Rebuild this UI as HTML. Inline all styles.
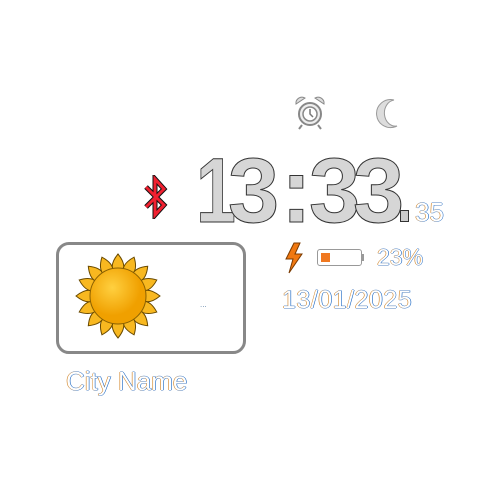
<!DOCTYPE html>
<html><head><style>
html,body{margin:0;width:480px;height:480px;background:#fff;overflow:hidden;font-family:"Liberation Sans",sans-serif}
.a{position:absolute}
.t{color:#fff;text-shadow:0.6px 0 #1060c0,-0.6px 0 #d08020,0 0.6px #5080c0,0 -0.6px #5080c0}
.d{position:absolute;top:145px;font-size:92px;line-height:92px;font-weight:bold;color:#d6d6d6;-webkit-text-stroke:1px #333}
</style></head><body>
<div class="d" style="left:196px;transform:scaleX(0.78);transform-origin:left top">1</div>
<div class="d" style="left:228px">3</div>
<div class="d" style="left:281px">:</div>
<div class="d" style="left:309px">3</div>
<div class="d" style="left:353px">3</div>
<div class="a" style="left:400px;top:210px;width:7px;height:10px;background:#ccc;border:1px solid #333"></div>
<div class="a t" style="left:415px;top:197px;font-size:26px">35</div>
<!-- bluetooth -->
<svg class="a" style="left:143px;top:175px" width="26" height="44" viewBox="0 0 26 44"><path d="M3 12 L21 30 L12 40 L12 4 L21 14 L3 32" fill="none" stroke="#111" stroke-width="5"/><path d="M3 12 L21 30 L12 40 L12 4 L21 14 L3 32" fill="none" stroke="#f02030" stroke-width="3"/></svg>
<!-- alarm -->
<svg class="a" style="left:293px;top:95px" width="34" height="36" viewBox="0 0 34 36"><circle cx="17" cy="19" r="11" fill="#eee" stroke="#888" stroke-width="2"/><circle cx="17" cy="19" r="7" fill="#fff" stroke="#888" stroke-width="1.5"/><path d="M17 14v5l3 3" stroke="#777" fill="none" stroke-width="1.5"/><path d="M3 9a6 6 0 0 1 9-6z M31 9a6 6 0 0 0-9-6z" fill="#ddd" stroke="#888"/><path d="M9 30l-3 4M25 30l3 4" stroke="#888" stroke-width="2"/></svg>
<!-- moon -->
<svg class="a" style="left:374px;top:98px" width="26" height="32" viewBox="0 0 26 32"><path d="M20 2 A14 14 0 1 0 23 28 A11 13 0 0 1 20 2z" fill="#ddd" stroke="#999"/></svg>
<!-- bolt -->
<svg class="a" style="left:283px;top:242px" width="22" height="32" viewBox="0 0 22 32"><path d="M11 1 L3 17 L10 17 L6 31 L19 12 L12 12 L17 1z" fill="#f07810" stroke="#7a3a00"/></svg>
<!-- battery -->
<div class="a" style="left:317px;top:249px;width:43px;height:15px;border:1px solid #999;border-radius:3px;background:#fff"></div>
<div class="a" style="left:361px;top:254px;width:3px;height:7px;background:#999"></div>
<div class="a" style="left:321px;top:253px;width:9px;height:9px;background:#f07820"></div>
<div class="a t" style="left:377px;top:244px;font-size:23px">23%</div>
<div class="a t" style="left:282px;top:286px;font-size:25px;letter-spacing:0.5px">13/01/2025</div>
<!-- weather box -->
<div class="a" style="left:56px;top:242px;width:184px;height:106px;border:3px solid #888;border-radius:13px;background:#fff"></div>
<svg class="a" style="left:73px;top:252px" width="90" height="88" viewBox="-45 -44 90 88">
<g fill="#f8b820" stroke="#6a4a00" stroke-width="1">
<path d="M0-42 C5-36 7-30 5-25 L-5-25 C-7-30 -5-36 0-42z" transform="rotate(0)"/><path d="M0-42 C5-36 7-30 5-25 L-5-25 C-7-30 -5-36 0-42z" transform="rotate(22.5)"/><path d="M0-42 C5-36 7-30 5-25 L-5-25 C-7-30 -5-36 0-42z" transform="rotate(45)"/><path d="M0-42 C5-36 7-30 5-25 L-5-25 C-7-30 -5-36 0-42z" transform="rotate(67.5)"/><path d="M0-42 C5-36 7-30 5-25 L-5-25 C-7-30 -5-36 0-42z" transform="rotate(90)"/><path d="M0-42 C5-36 7-30 5-25 L-5-25 C-7-30 -5-36 0-42z" transform="rotate(112.5)"/><path d="M0-42 C5-36 7-30 5-25 L-5-25 C-7-30 -5-36 0-42z" transform="rotate(135)"/><path d="M0-42 C5-36 7-30 5-25 L-5-25 C-7-30 -5-36 0-42z" transform="rotate(157.5)"/><path d="M0-42 C5-36 7-30 5-25 L-5-25 C-7-30 -5-36 0-42z" transform="rotate(180)"/><path d="M0-42 C5-36 7-30 5-25 L-5-25 C-7-30 -5-36 0-42z" transform="rotate(202.5)"/><path d="M0-42 C5-36 7-30 5-25 L-5-25 C-7-30 -5-36 0-42z" transform="rotate(225)"/><path d="M0-42 C5-36 7-30 5-25 L-5-25 C-7-30 -5-36 0-42z" transform="rotate(247.5)"/><path d="M0-42 C5-36 7-30 5-25 L-5-25 C-7-30 -5-36 0-42z" transform="rotate(270)"/><path d="M0-42 C5-36 7-30 5-25 L-5-25 C-7-30 -5-36 0-42z" transform="rotate(292.5)"/><path d="M0-42 C5-36 7-30 5-25 L-5-25 C-7-30 -5-36 0-42z" transform="rotate(315)"/><path d="M0-42 C5-36 7-30 5-25 L-5-25 C-7-30 -5-36 0-42z" transform="rotate(337.5)"/>
</g>
<defs><radialGradient id="g" cx="0.4" cy="0.35"><stop offset="0" stop-color="#ffd040"/><stop offset="1" stop-color="#f0a000"/></radialGradient></defs>
<circle r="28" fill="url(#g)" stroke="#8a6000"/>
</svg>
<div class="a" style="left:200px;top:300px;font-size:8px;color:#68a">...</div>
<div class="a t" style="left:66px;top:366px;font-size:26px">City Name</div>
</body></html>
